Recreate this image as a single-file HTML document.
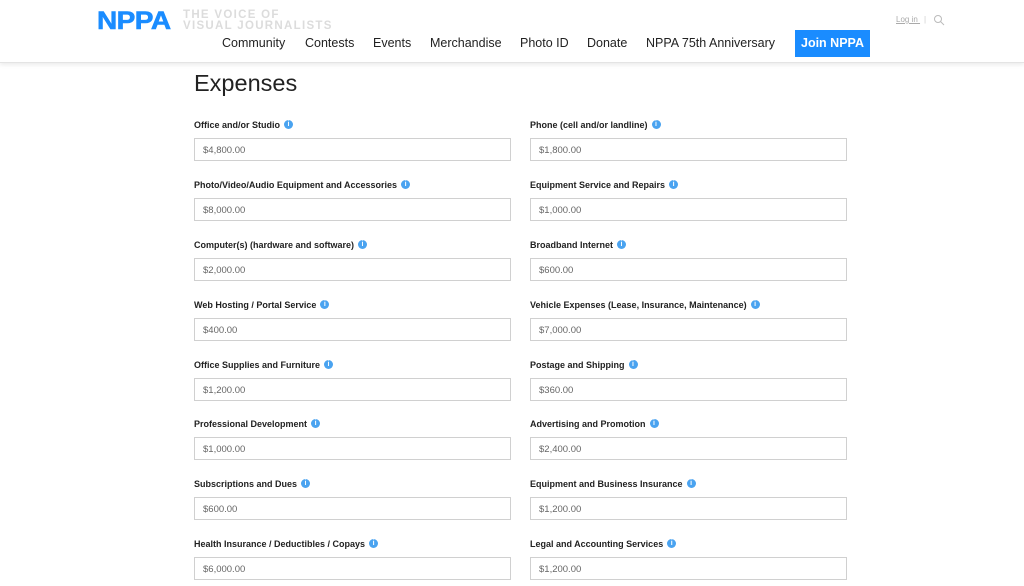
<!DOCTYPE html>
<html><head><meta charset="utf-8"><style>
*{margin:0;padding:0;box-sizing:border-box}
body{width:1024px;height:586px;overflow:hidden;background:#fff;font-family:"Liberation Sans",Arial,sans-serif;position:relative}
.hdr{position:absolute;left:0;top:0;width:1024px;height:63px;background:#fff;border-bottom:1px solid #e4e4e4;box-shadow:0 2px 4px rgba(0,0,0,.08)}
.logo{position:absolute;left:97px;top:7px;font-size:25px;font-weight:bold;color:#1a8cff;letter-spacing:-0.5px;transform:scaleX(1.12);transform-origin:left;-webkit-text-stroke:0.6px #1a8cff}
.tag{position:absolute;left:183px;top:10px;font-size:11.5px;line-height:10.5px;color:#dcdcdc;font-weight:bold;letter-spacing:1.3px}
.nav{position:absolute;top:36px;font-size:12.5px;color:#222}
.join{position:absolute;left:795px;top:30px;width:75px;height:27px;background:#1a8cff;color:#fff;font-size:12.5px;text-align:center;line-height:27px;font-weight:bold}
.login{position:absolute;left:896px;top:15px;font-size:8px;color:#aaa;text-decoration:underline}
h1{position:absolute;left:194px;top:70px;font-size:23.5px;font-weight:normal;color:#222}
.lbl{position:absolute;font-size:9px;font-weight:bold;color:#222;line-height:10px}
.lbl i{display:inline-block;width:9px;height:9px;border-radius:50%;background:#4aa3f0;color:#fff;font-size:7px;line-height:9px;text-align:center;font-style:normal;margin-left:4px;vertical-align:top}
.in{position:absolute;width:317px;height:23px;border:1px solid #d0d0d0;font-size:9.5px;color:#666;padding-left:8px;line-height:23px}
</style></head><body>
<div class="hdr">
<div class="logo">NPPA</div>
<div class="tag">THE VOICE OF<br>VISUAL JOURNALISTS</div>
<div class="nav" style="left:222px">Community</div>
<div class="nav" style="left:305px">Contests</div>
<div class="nav" style="left:373px">Events</div>
<div class="nav" style="left:430px">Merchandise</div>
<div class="nav" style="left:520px">Photo ID</div>
<div class="nav" style="left:587px">Donate</div>
<div class="nav" style="left:646px">NPPA 75th Anniversary</div>
<div class="join">Join NPPA</div>
<div class="login">Log in <span style="text-decoration:none;color:#ccc;margin-left:4px">|</span></div>
<svg style="position:absolute;left:933px;top:14px" width="12" height="12" viewBox="0 0 12 12"><circle cx="5" cy="5" r="3.5" fill="none" stroke="#bbb" stroke-width="1"/><path d="M7.5 7.5L11 11" stroke="#bbb"/></svg>
</div>
<h1>Expenses</h1>
<div class="lbl" style="left:194px;top:120px">Office and/or Studio<i>i</i></div>
<div class="in" style="left:194px;top:138px">$4,800.00</div>
<div class="lbl" style="left:530px;top:120px">Phone (cell and/or landline)<i>i</i></div>
<div class="in" style="left:530px;top:138px">$1,800.00</div>
<div class="lbl" style="left:194px;top:180px">Photo/Video/Audio Equipment and Accessories<i>i</i></div>
<div class="in" style="left:194px;top:198px">$8,000.00</div>
<div class="lbl" style="left:530px;top:180px">Equipment Service and Repairs<i>i</i></div>
<div class="in" style="left:530px;top:198px">$1,000.00</div>
<div class="lbl" style="left:194px;top:240px">Computer(s) (hardware and software)<i>i</i></div>
<div class="in" style="left:194px;top:258px">$2,000.00</div>
<div class="lbl" style="left:530px;top:240px">Broadband Internet<i>i</i></div>
<div class="in" style="left:530px;top:258px">$600.00</div>
<div class="lbl" style="left:194px;top:300px">Web Hosting / Portal Service<i>i</i></div>
<div class="in" style="left:194px;top:318px">$400.00</div>
<div class="lbl" style="left:530px;top:300px">Vehicle Expenses (Lease, Insurance, Maintenance)<i>i</i></div>
<div class="in" style="left:530px;top:318px">$7,000.00</div>
<div class="lbl" style="left:194px;top:360px">Office Supplies and Furniture<i>i</i></div>
<div class="in" style="left:194px;top:378px">$1,200.00</div>
<div class="lbl" style="left:530px;top:360px">Postage and Shipping<i>i</i></div>
<div class="in" style="left:530px;top:378px">$360.00</div>
<div class="lbl" style="left:194px;top:419px">Professional Development<i>i</i></div>
<div class="in" style="left:194px;top:437px">$1,000.00</div>
<div class="lbl" style="left:530px;top:419px">Advertising and Promotion<i>i</i></div>
<div class="in" style="left:530px;top:437px">$2,400.00</div>
<div class="lbl" style="left:194px;top:479px">Subscriptions and Dues<i>i</i></div>
<div class="in" style="left:194px;top:497px">$600.00</div>
<div class="lbl" style="left:530px;top:479px">Equipment and Business Insurance<i>i</i></div>
<div class="in" style="left:530px;top:497px">$1,200.00</div>
<div class="lbl" style="left:194px;top:539px">Health Insurance / Deductibles / Copays<i>i</i></div>
<div class="in" style="left:194px;top:557px">$6,000.00</div>
<div class="lbl" style="left:530px;top:539px">Legal and Accounting Services<i>i</i></div>
<div class="in" style="left:530px;top:557px">$1,200.00</div>
</body></html>
